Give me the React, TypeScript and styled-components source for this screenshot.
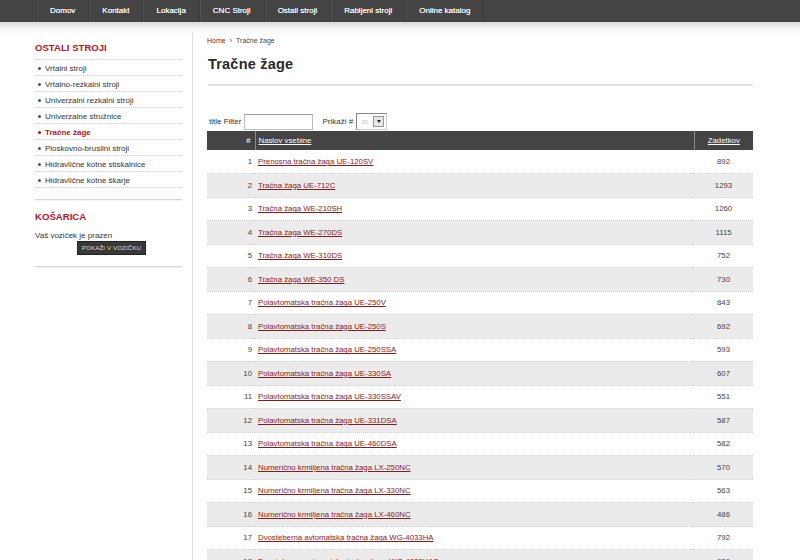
import React from "react";
import styled, { createGlobalStyle } from "styled-components";

const GlobalStyle = createGlobalStyle`
  html, body { margin: 0; padding: 0; background: #fff; }
  body { font-family: "Liberation Sans", Arial, sans-serif; color: #333; }
  * { box-sizing: border-box; }
`;

const NavBar = styled.nav`
  height: 22px;
  background: #444;
  display: flex;
  padding-left: 36px;
`;

const NavItem = styled.a`
  display: block;
  padding: 0 13px;
  line-height: 22px;
  font-size: 8px;
  color: #f0f0f0;
  text-decoration: none;
  border-left: 1px solid #3a3a3a;
  box-shadow: inset 1px 0 0 #525252;
  text-shadow: 0 0 0.4px #fff;
  &:last-child { border-right: 1px solid #3a3a3a; }
`;

const Body = styled.div`
  display: flex;
  padding-left: 35px;
  background: linear-gradient(#d9d9d9, #f4f4f4 6px, #fff 14px);
  min-height: 538px;
`;

const Sidebar = styled.aside`
  width: 147px;
  flex: none;
  padding-top: 19px;
`;

const BoxTitle = styled.h3<{ $border?: boolean }>`
  margin: 0;
  font-size: 9.6px;
  line-height: 14px;
  font-weight: bold;
  color: #b8141c;
  padding-bottom: ${(p) => (p.$border ? "4px" : "0")};
  border-bottom: ${(p) => (p.$border ? "1px dotted #cfcfcf" : "none")};
`;

const MenuList = styled.ul`
  list-style: none;
  margin: 0;
  padding: 0;
`;

const MenuItem = styled.li<{ $active?: boolean }>`
  height: 16px;
  line-height: 15px;
  border-bottom: 1px dotted #cfcfcf;
  font-size: 8px;
  padding-left: 3px;
  padding-top: 1px;
  color: ${(p) => (p.$active ? "#b8141c" : "#333")};
  font-weight: ${(p) => (p.$active ? "bold" : "normal")};
  display: flex;
  align-items: center;
  gap: 4px;
  &::before {
    content: "";
    width: 3px;
    height: 3px;
    border-radius: 50%;
    background: ${(p) => (p.$active ? "#b8141c" : "#555")};
  }
`;

const SolidRule = styled.div<{ $top: number }>`
  margin-top: ${(p) => p.$top}px;
  border-top: 1px solid #d6d6d6;
  border-bottom: 1px solid #f2f2f2;
`;

const CartBox = styled.div`
  padding-top: 9px;
  padding-bottom: 11px;
`;

const CartText = styled.div`
  font-size: 8px;
  line-height: 10px;
  margin-top: 7px;
  color: #333;
`;

const CartButton = styled.button`
  display: block;
  margin: 0 0 0 42px;
  height: 14px;
  width: 69px;
  padding: 0;
  background: #383838;
  border: 1px solid #222;
  color: #ddd;
  font-family: "Liberation Sans", Arial, sans-serif;
  font-size: 6.2px;
  letter-spacing: 0.1px;
  line-height: 12px;
`;

const Main = styled.main`
  flex: 1;
  margin-left: 10px;
  margin-top: 11px;
  border-left: 1px solid #ddd;
  padding: 2px 47px 0 14px;
`;

const Crumbs = styled.div`
  font-size: 7px;
  line-height: 12px;
  color: #444;
  display: flex;
  gap: 4px;
`;

const CrumbLink = styled.a`
  color: #8b1a1a;
  text-decoration: none;
`;

const Title = styled.h1`
  margin: 7px 0 0 1px;
  font-size: 14.5px;
  line-height: 20px;
  font-weight: bold;
  color: #2a2a2a;
  letter-spacing: 0.2px;
  padding-bottom: 10px;
  border-bottom: 2px solid #e2e2e2;
`;

const FilterRow = styled.div`
  margin-top: 27px;
  height: 17px;
  display: flex;
  align-items: center;
  font-size: 8px;
  color: #333;
  padding-left: 2px;
`;

const TextInput = styled.div`
  width: 69px;
  height: 16px;
  margin-left: 3px;
  margin-right: 9px;
  border: 1px solid #bdbdbd;
  border-top-color: #999;
  background: #fff;
`;

const SelectBox = styled.div`
  width: 31px;
  height: 17px;
  margin-left: 3px;
  border: 1px solid #888;
  border-right-color: #ccc;
  border-bottom-color: #ccc;
  background: #fff;
  display: flex;
  align-items: center;
  justify-content: space-between;
  padding: 0 2px 0 4px;
  font-size: 6px;
  color: #bbb;
`;

const SelectArrow = styled.span`
  width: 11px;
  height: 11px;
  background: #e6e6e6;
  border: 1px solid #999;
  display: flex;
  align-items: center;
  justify-content: center;
  &::after {
    content: "";
    border-left: 2.5px solid transparent;
    border-right: 2.5px solid transparent;
    border-top: 3px solid #222;
  }
`;

const Table = styled.table`
  width: 100%;
  margin-top: 1px;
  border-collapse: collapse;
  font-size: 7.8px;
`;

const HeadRow = styled.tr`
  height: 19px;
  background: #444;
`;

const Th = styled.th<{ $w?: number; $align: string; $sep?: string }>`
  width: ${(p) => (p.$w ? `${p.$w}px` : "auto")};
  text-align: ${(p) => p.$align};
  font-weight: normal;
  color: #fff;
  padding: 0 ${(p) => (p.$align === "right" ? "4px" : "0")} 0
    ${(p) => (p.$align === "left" ? "3px" : "0")};
  border-right: ${(p) => (p.$sep === "r" ? "1px solid #8a8a8a" : "none")};
  border-left: ${(p) => (p.$sep === "l" ? "1px solid #8a8a8a" : "none")};
`;

const HeadLink = styled.a`
  color: #fff;
  text-decoration: underline;
`;

const Row = styled.tr<{ $alt: boolean }>`
  height: 23.5px;
  background: ${(p) => (p.$alt ? "#ebebeb" : "#fff")};
  border-bottom: 1px dotted #d0d0d0;
`;

const Td = styled.td<{ $align: string }>`
  text-align: ${(p) => p.$align};
  color: #444;
  padding: 0 ${(p) => (p.$align === "right" ? "3px" : "0")} 0
    ${(p) => (p.$align === "left" ? "3px" : "0")};
`;

const RowLink = styled.a`
  color: #8b1a1a;
  text-decoration: underline;
`;

const navItems = [
  "Domov",
  "Kontakt",
  "Lokacija",
  "CNC Stroji",
  "Ostali stroji",
  "Rabljeni stroji",
  "Online katalog",
];

const menu = [
  "Vrtalni stroji",
  "Vrtalno-rezkalni stroji",
  "Univerzalni rezkalni stroji",
  "Univerzalne stružnice",
  "Tračne žage",
  "Ploskovno-brusilni stroji",
  "Hidravlične kotne stiskalnice",
  "Hidravlične kotne škarje",
];

const rows: [string, number][] = [
  ["Prenosna tračna žaga UE-120SV", 892],
  ["Tračna žaga UE-712C", 1293],
  ["Tračna žaga WE-210SH", 1260],
  ["Tračna žaga WE-270DS", 1115],
  ["Tračna žaga WE-310DS", 752],
  ["Tračna žaga WE-350 DS", 730],
  ["Polavtomatska tračna žaga UE-250V", 843],
  ["Polavtomatska tračna žaga UE-250S", 692],
  ["Polavtomatska tračna žaga UE-250SSA", 593],
  ["Polavtomatska tračna žaga UE-330SA", 607],
  ["Polavtomatska tračna žaga UE-330SSAV", 551],
  ["Polavtomatska tračna žaga UE-331DSA", 587],
  ["Polavtomatska tračna žaga UE-460DSA", 582],
  ["Numerično krmiljena tračna žaga LX-250NC", 570],
  ["Numerično krmiljena tračna žaga LX-330NC", 563],
  ["Numerično krmiljena tračna žaga LX-460NC", 486],
  ["Dvosteberna avtomatska tračna žaga WG-4033HA", 792],
  ["Dvosteberna avtomatska tračna žaga WG-4033HAS", 636],
];

export default function App() {
  return (
    <>
      <GlobalStyle />
      <NavBar>
        {navItems.map((n) => (
          <NavItem key={n}>{n}</NavItem>
        ))}
      </NavBar>
      <Body>
        <Sidebar>
          <BoxTitle $border>OSTALI STROJI</BoxTitle>
          <MenuList>
            {menu.map((m) => (
              <MenuItem key={m} $active={m === "Tračne žage"}>
                {m}
              </MenuItem>
            ))}
          </MenuList>
          <SolidRule $top={11} />
          <CartBox>
            <BoxTitle>KOŠARICA</BoxTitle>
            <CartText>Vaš voziček je prazen</CartText>
            <CartButton>POKAŽI V VOZIČKU</CartButton>
          </CartBox>
          <SolidRule $top={0} />
        </Sidebar>
        <Main>
          <Crumbs>
            <CrumbLink>Home</CrumbLink>
            <span>›</span>
            <span>Tračne žage</span>
          </Crumbs>
          <Title>Tračne žage</Title>
          <FilterRow>
            title Filter
            <TextInput />
            Prikaži #
            <SelectBox>
              30
              <SelectArrow />
            </SelectBox>
          </FilterRow>
          <Table>
            <thead>
              <HeadRow>
                <Th $w={48} $align="right" $sep="r">#</Th>
                <Th $align="left">
                  <HeadLink>Naslov vsebine</HeadLink>
                </Th>
                <Th $w={59} $align="center" $sep="l">
                  <HeadLink>Zadetkov</HeadLink>
                </Th>
              </HeadRow>
            </thead>
            <tbody>
              {rows.map(([name, hits], i) => (
                <Row key={name} $alt={i % 2 === 1}>
                  <Td $align="right">{i + 1}</Td>
                  <Td $align="left">
                    <RowLink>{name}</RowLink>
                  </Td>
                  <Td $align="center">{hits}</Td>
                </Row>
              ))}
            </tbody>
          </Table>
        </Main>
      </Body>
    </>
  );
}
